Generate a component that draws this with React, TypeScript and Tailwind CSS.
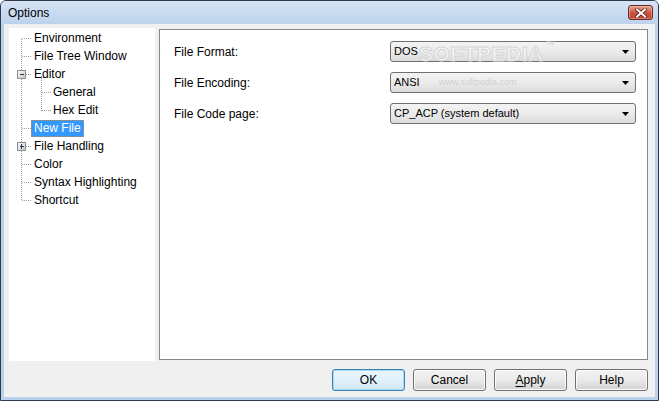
import type { ReactNode } from "react";

const FONT = { fontFamily: '"Liberation Sans", Arial, sans-serif' };

type Node = { label: string; level: 0 | 1; box?: "minus" | "plus"; selected?: boolean };

const TREE: Node[] = [
  { label: "Environment", level: 0 },
  { label: "File Tree Window", level: 0 },
  { label: "Editor", level: 0, box: "minus" },
  { label: "General", level: 1 },
  { label: "Hex Edit", level: 1 },
  { label: "New File", level: 0, selected: true },
  { label: "File Handling", level: 0, box: "plus" },
  { label: "Color", level: 0 },
  { label: "Syntax Highlighting", level: 0 },
  { label: "Shortcut", level: 0 },
];

const ROW = 18;

function TreeLines() {
  const cy = (i: number) => i * ROW + 10.5;
  const dot = { stroke: "#a0a0a0", strokeDasharray: "1 1", shapeRendering: "crispEdges" as const };
  return (
    <svg className="absolute left-0 top-0 pointer-events-none" width={146} height={200}>
      <line x1={12.5} y1={cy(0)} x2={12.5} y2={cy(9)} {...dot} />
      <line x1={32.5} y1={cy(2) + 1} x2={32.5} y2={cy(4)} {...dot} />
      {TREE.map((n, i) =>
        n.level === 0 ? (
          <line key={i} x1={13} y1={cy(i)} x2={22} y2={cy(i)} {...dot} />
        ) : (
          <line key={i} x1={33} y1={cy(i)} x2={42} y2={cy(i)} {...dot} />
        )
      )}
      {TREE.map((n, i) =>
        n.box ? (
          <g key={"b" + i}>
            <defs>
              <linearGradient id={"g" + i} x1="0" y1="0" x2="1" y2="1">
                <stop offset="0" stopColor="#ffffff" />
                <stop offset="1" stopColor="#c6c6c6" />
              </linearGradient>
            </defs>
            <rect x={8.5} y={cy(i) - 4.5} width={8} height={8} fill={`url(#g${i})`} stroke="#919191" shapeRendering="crispEdges" />
            <line x1={10.5} y1={cy(i) - 0.5} x2={15} y2={cy(i) - 0.5} stroke="#1c3b6b" shapeRendering="crispEdges" />
            {n.box === "plus" && (
              <line x1={12.5} y1={cy(i) - 2.5} x2={12.5} y2={cy(i) + 2} stroke="#1c3b6b" shapeRendering="crispEdges" />
            )}
          </g>
        ) : null
      )}
    </svg>
  );
}

function Combo({ value }: { value: string }) {
  return (
    <div className="h-[21px] w-[246px] rounded-[3px] border border-[#707070] bg-gradient-to-b from-[#f3f3f3] via-[#ebebeb] to-[#dcdcdc] flex items-center justify-between pl-[3px] pr-[6px] text-[11px] text-black">
      <span>{value}</span>
      <svg width="7" height="4" viewBox="0 0 7 4">
        <polygon points="0,0 7,0 3.5,4" fill="#000" />
      </svg>
    </div>
  );
}

function Button({ children, primary }: { children: ReactNode; primary?: boolean }) {
  return (
    <button
      className={
        "w-[73px] h-[22px] rounded-[3px] border text-[12px] text-black flex items-center justify-center bg-gradient-to-b " +
        (primary
          ? "border-[#3c7fb1] from-[#eaf6fd] via-[#e2f1fb] to-[#cfe7f7] shadow-[inset_0_0_0_1px_#a6dcf6]"
          : "border-[#707070] from-[#f2f2f2] via-[#eaeaea] to-[#d2d2d2] shadow-[inset_0_0_0_1px_#fcfcfc]")
      }
    >
      {children}
    </button>
  );
}

export default function App() {
  return (
    <div style={FONT} className="w-[659px] h-[401px] flex flex-col bg-[#b9d1ea] border border-[#2e3a4c] rounded-t-[6px] overflow-hidden">
      <div className="h-[23px] shrink-0 flex items-center justify-between pl-[7px] pr-[5px] bg-gradient-to-b from-[#d6e4f4] to-[#bcd2ec]">
        <span className="text-[12px] text-black">Options</span>
        <div className="w-[25px] h-[15px] rounded-[3px] border border-[#6b2b27] bg-gradient-to-b from-[#e9a999] via-[#cf553f] to-[#c04530] flex items-center justify-center shadow-[inset_0_0_0_1px_#f0b9ad80]">
          <svg width="12" height="10" viewBox="0 0 12 10">
            <path d="M2 1.5 L10 8.5 M10 1.5 L2 8.5" stroke="#5a1e18" strokeWidth="3.6" strokeLinecap="square" />
            <path d="M2 1.5 L10 8.5 M10 1.5 L2 8.5" stroke="#ffffff" strokeWidth="2" strokeLinecap="square" />
          </svg>
        </div>
      </div>

      <div className="flex-1 mx-[3px] mb-[3px] bg-[#f0f0f0] flex flex-col pt-[4px] pl-[5px] pr-[7px] pb-[6px]">
        <div className="h-[333px] flex gap-[4px]">
          <div className="w-[146px] bg-white relative pt-[1px] text-[12px] text-black">
            <TreeLines />
            {TREE.map((n) => (
              <div key={n.label} className={"h-[18px] flex items-center " + (n.level === 0 ? "pl-[22px]" : "pl-[41px]")}>
                <span
                  className={
                    "h-[17px] px-[2px] flex items-center border border-dotted " +
                    (n.selected ? "bg-[#3399ff] text-white border-[#d08a40]" : "border-transparent")
                  }
                >
                  {n.label}
                </span>
              </div>
            ))}
          </div>

          <div className="flex-1 mt-[1px] mb-[1px] bg-white border border-[#828790] relative pt-[11px] pl-[14px]">
            <div className="grid grid-cols-[216px_246px] gap-y-[10px] items-center text-[12px] text-black">
              <span>File Format:</span>
              <Combo value="DOS" />
              <span>File Encoding:</span>
              <Combo value="ANSI" />
              <span>File Code page:</span>
              <Combo value="CP_ACP (system default)" />
            </div>
            <div className="absolute left-[259px] top-[12px] pointer-events-none text-[21px] leading-[24px] font-bold tracking-[0.5px] text-white/60 [-webkit-text-stroke:1px_#d4d4d4]">
              SOFTPEDIA
            </div>
            <div className="absolute left-[386px] top-[10px] pointer-events-none text-[6px] leading-[6px] text-[#d0d0d0]">TM</div>
            <div className="absolute left-[279px] top-[46px] pointer-events-none text-[9px] text-[#d0d0d0]">
              www.softpedia.com
            </div>
          </div>
        </div>

        <div className="mt-[8px] flex justify-end gap-[8px]">
          <Button primary>OK</Button>
          <Button>Cancel</Button>
          <Button>
            <span>
              <span className="underline underline-offset-2">A</span>pply
            </span>
          </Button>
          <Button>Help</Button>
        </div>
      </div>
    </div>
  );
}
